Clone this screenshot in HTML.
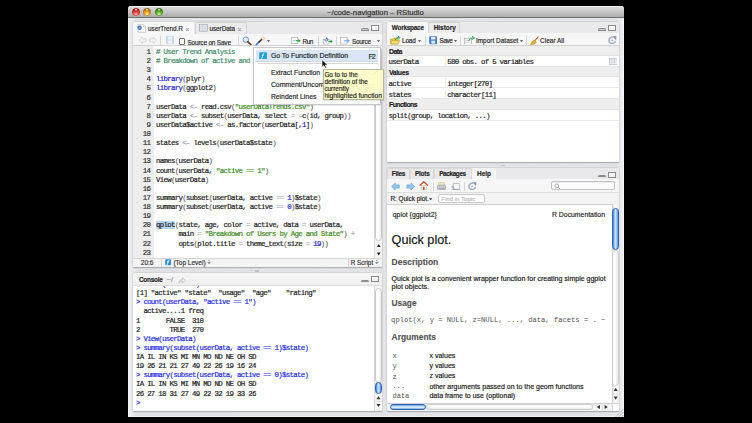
<!DOCTYPE html>
<html><head><meta charset="utf-8">
<style>
*{box-sizing:border-box;margin:0;padding:0}
html,body{width:752px;height:423px;overflow:hidden;background:#000}
body{position:relative;font-family:"Liberation Sans",sans-serif;color:#222}
.a{position:absolute}
.t{position:absolute;white-space:pre;line-height:1;-webkit-text-stroke:0.15px currentColor}
.code{font-family:"Liberation Mono",monospace;font-size:7.4px;letter-spacing:-0.69px;line-height:9.12px;white-space:pre;position:absolute;-webkit-text-stroke:0.2px currentColor}
.cm{color:#3f8a6c}
.kw{color:#2020d8}
.st{color:#3b8a22}
.nm{color:#2020d8}
.op{color:#9a9a9a}
.pa{color:#6b6b6b}
.sel{background:#b9d7fb}
.pr{color:#1e2cf0}
</style></head><body>

<div class="a" style="left:127.60px;top:6.00px;width:496.40px;height:411.00px;background:linear-gradient(90deg,#eceef1,#e1e2e6 1.5%,#e3e4e8 50%,#e1e2e6 98.5%,#eceef1);border-radius:3px 3px 0 0;border-left:0.6px solid #f6f6f6;border-right:0.6px solid #f6f6f6;border-bottom:0.8px solid #f4f4f4"></div>
<div class="a" style="left:127.60px;top:6.00px;width:496.40px;height:12.30px;background:linear-gradient(#f2f2f2 0,#dcdcdc 10%,#adadad 100%);border-bottom:1px solid #6e6e6e;border-radius:3px 3px 0 0"></div>
<svg class="a" style="left:132.00px;top:7.85px" width="8.00" height="8.00" viewBox="0 0 8.00 8.00"><defs><radialGradient id="tl0" cx="50%" cy="85%" r="75%"><stop offset="0" stop-color="#ffc0b8"/><stop offset="0.55" stop-color="#f0382e"/><stop offset="1" stop-color="#a51a12"/></radialGradient><radialGradient id="th0" cx="50%" cy="40%" r="60%"><stop offset="0" stop-color="#fff" stop-opacity=".95"/><stop offset="1" stop-color="#fff" stop-opacity="0"/></radialGradient></defs><circle cx="4" cy="4" r="3.7" fill="url(#tl0)" stroke="#a51a12" stroke-width="0.4"/><ellipse cx="4" cy="1.9" rx="1.6" ry="1.1" fill="url(#th0)"/></svg>
<svg class="a" style="left:143.10px;top:7.85px" width="8.00" height="8.00" viewBox="0 0 8.00 8.00"><defs><radialGradient id="tl1" cx="50%" cy="85%" r="75%"><stop offset="0" stop-color="#fff29a"/><stop offset="0.55" stop-color="#f29a1a"/><stop offset="1" stop-color="#9a5a08"/></radialGradient><radialGradient id="th1" cx="50%" cy="40%" r="60%"><stop offset="0" stop-color="#fff" stop-opacity=".95"/><stop offset="1" stop-color="#fff" stop-opacity="0"/></radialGradient></defs><circle cx="4" cy="4" r="3.7" fill="url(#tl1)" stroke="#9a5a08" stroke-width="0.4"/><ellipse cx="4" cy="1.9" rx="1.6" ry="1.1" fill="url(#th1)"/></svg>
<svg class="a" style="left:154.50px;top:7.85px" width="8.00" height="8.00" viewBox="0 0 8.00 8.00"><defs><radialGradient id="tl2" cx="50%" cy="85%" r="75%"><stop offset="0" stop-color="#cff79a"/><stop offset="0.55" stop-color="#5cb52a"/><stop offset="1" stop-color="#2f6a10"/></radialGradient><radialGradient id="th2" cx="50%" cy="40%" r="60%"><stop offset="0" stop-color="#fff" stop-opacity=".95"/><stop offset="1" stop-color="#fff" stop-opacity="0"/></radialGradient></defs><circle cx="4" cy="4" r="3.7" fill="url(#tl2)" stroke="#2f6a10" stroke-width="0.4"/><ellipse cx="4" cy="1.9" rx="1.6" ry="1.1" fill="url(#th2)"/></svg>
<div class="t" style="left:327.00px;top:8.85px;font-size:7.70px;color:#2e2e2e;">~/code-navigation – RStudio</div>
<div class="a" style="left:133.00px;top:22.00px;width:249.00px;height:245.00px;background:#fff;box-shadow:0 0 1px rgba(0,0,0,.28),0 0.8px 1.2px rgba(0,0,0,.25);border-radius:2px 2px 0 0"></div>
<div class="a" style="left:133.00px;top:22.00px;width:249.00px;height:11.60px;background:#e9e9eb"></div>
<div class="a" style="left:133.00px;top:22.00px;width:60.70px;height:11.80px;background:#f7f7f7;border-radius:2px 2px 0 0"></div>
<div class="a" style="left:194.50px;top:22.40px;width:52.30px;height:11.20px;background:#ebebeb;border:0.6px solid #d2d2d2;border-bottom:none;border-radius:2px 2px 0 0"></div>
<div class="a" style="left:133.00px;top:33.60px;width:249.00px;height:12.40px;background:#f6f6f6;border-bottom:0.8px solid #cfcfcf"></div>
<div class="a" style="left:133.00px;top:46.00px;width:249.00px;height:212.00px;background:#fff"></div>
<div class="a" style="left:133.00px;top:46.00px;width:21.00px;height:212.00px;background:#ededed"></div>
<div class="a" style="left:133.00px;top:258.00px;width:249.00px;height:9.00px;background:#f4f4f4;border-top:0.8px solid #d6d6d6"></div>
<div class="a" style="left:361.00px;top:28.20px;width:7.80px;height:2.60px;border:0.7px solid #8c8c8c;border-radius:2px 2px 0.5px 0.5px;background:linear-gradient(#e6e6e6,#b8b8b8)"></div>
<div class="a" style="left:371.00px;top:24.90px;width:7.60px;height:6.00px;border:0.6px solid #8a8a8a;background:linear-gradient(#fdfdfd,#ececec)"></div>
<svg class="a" style="left:137.00px;top:24.00px" width="10.00" height="9.00" viewBox="0 0 10.00 9.00"><path d="M1.3 0.4 H6 L8.7 3.1 V8.3 H1.3 Z" fill="#fbfbfb" stroke="#a8a8a8" stroke-width="0.55"/><path d="M6 0.4 V3.1 H8.7" fill="#e8e8e8" stroke="#b0b0b0" stroke-width="0.45"/><circle cx="2.6" cy="3.8" r="2.3" fill="#3f78c4"/><path d="M1.8 4.8 L3.4 2.8" stroke="#e6f0fb" stroke-width="0.7"/></svg>
<div class="t" style="left:148.00px;top:26.06px;font-size:6.40px;letter-spacing:-0.033px;color:#1f1f2a;">userTrend.R</div>
<div class="t" style="left:185.20px;top:25.55px;font-size:7.00px;color:#9a9a9a;">×</div>
<svg class="a" style="left:199.00px;top:24.20px" width="9.00" height="7.60" viewBox="0 0 9.00 7.60"><rect x="0.5" y="0.5" width="8" height="6.6" fill="#f4f6f8" stroke="#8b97a6" stroke-width="0.6"/><path d="M0.5 2.6H8.5M0.5 4.8H8.5M3.2 0.5V7.1M5.9 0.5V7.1" stroke="#a8b4c2" stroke-width="0.5"/></svg>
<div class="t" style="left:209.50px;top:26.06px;font-size:6.40px;letter-spacing:-0.067px;color:#1f1f2a;">userData</div>
<div class="t" style="left:237.60px;top:25.55px;font-size:7.00px;color:#9a9a9a;">×</div>
<svg class="a" style="left:137.50px;top:36.00px" width="19.50" height="9.00" viewBox="0 0 19.50 9.00"><path d="M1 4.3 L4.3 1 V2.8 H8 V5.8 H4.3 V7.6 Z" fill="#f3f3f3" stroke="#c8c8c8" stroke-width="0.7"/><path d="M18.6 4.3 L15.3 1 V2.8 H11.6 V5.8 H15.3 V7.6 Z" fill="#f3f3f3" stroke="#d0d0d0" stroke-width="0.7"/></svg>
<div class="a" style="left:160.30px;top:36.00px;width:0.70px;height:9.00px;background:#d6d6d6"></div>
<svg class="a" style="left:165.80px;top:36.30px" width="8.20" height="8.20" viewBox="0 0 8.20 8.20"><rect x="0.5" y="0.5" width="7.2" height="7.2" rx="0.8" fill="#cfe0f2" stroke="#b0c8e0" stroke-width="0.6"/><rect x="2" y="0.8" width="4.2" height="2.6" fill="#eef5fc"/><rect x="2.3" y="4.6" width="3.6" height="3" fill="#f2f7fc"/></svg>
<div class="a" style="left:179.00px;top:38.10px;width:6.40px;height:6.70px;background:#fff;border:0.8px solid #6e6e6e;border-radius:1px"></div>
<div class="t" style="left:187.50px;top:39.86px;font-size:6.40px;letter-spacing:-0.157px;color:#1f1f2a;">Source on Save</div>
<div class="a" style="left:237.70px;top:36.00px;width:0.70px;height:9.00px;background:#d6d6d6"></div>
<svg class="a" style="left:242.00px;top:35.80px" width="10.00" height="9.20" viewBox="0 0 10.00 9.20"><circle cx="3.9" cy="3.7" r="2.8" fill="#cfe4fa" stroke="#5e86b8" stroke-width="0.8"/><circle cx="3.4" cy="3" r="1.1" fill="#f4faff"/><path d="M5.9 5.8 L8.8 8.6" stroke="#6a3e18" stroke-width="1.7" stroke-linecap="round"/></svg>
<svg class="a" style="left:255.00px;top:35.50px" width="11.00" height="10.00" viewBox="0 0 11.00 10.00"><path d="M1.2 8.8 L4.5 5.6" stroke="#2f78c8" stroke-width="1.5" stroke-linecap="round"/><path d="M4.3 5.8 L7.2 3" stroke="#222" stroke-width="1.5" stroke-linecap="round"/><path d="M8 0.2 V5.2 M5.6 2.7 H10.6 M6.3 1 L9.7 4.4 M9.7 1 L6.3 4.4" stroke="#f5a560" stroke-width="0.55"/><circle cx="8" cy="2.7" r="0.9" fill="#fff"/></svg>
<svg class="a" style="left:267.00px;top:39.50px" width="3.50" height="2.50" viewBox="0 0 3.50 2.50"><path d="M0 0.3 H3 L1.5 2 Z" fill="#333"/></svg>
<svg class="a" style="left:290.50px;top:37.00px" width="11.00" height="7.50" viewBox="0 0 11.00 7.50"><rect x="0.4" y="0.6" width="6.4" height="6.2" fill="#fff" stroke="#9a9a9a" stroke-width="0.5"/><path d="M1.4 3.7 H5.5" stroke="#8db4e6" stroke-width="0.8"/><path d="M5 3.7 H7.8" stroke="#2a9a3a" stroke-width="1.1"/><path d="M7.4 1.8 L9.8 3.7 L7.4 5.6 Z" fill="#2a9a3a"/></svg>
<div class="t" style="left:302.60px;top:38.66px;font-size:6.40px;letter-spacing:-0.520px;color:#1f1f2a;">Run</div>
<div class="a" style="left:318.20px;top:36.00px;width:0.70px;height:9.00px;background:#d6d6d6"></div>
<svg class="a" style="left:323.00px;top:37.00px" width="11.00" height="7.50" viewBox="0 0 11.00 7.50"><rect x="0.4" y="2.6" width="5.6" height="4.4" fill="#fff" stroke="#9a9a9a" stroke-width="0.5"/><path d="M1.8 2.4 A1.5 1.5 0 1 0 3.6 1.2" stroke="#2a5fd0" stroke-width="0.8" fill="none"/><path d="M3.9 0.2 L4.2 2 L2.6 1.5Z" fill="#2a5fd0"/><path d="M5.4 4.4 H8" stroke="#2a9a3a" stroke-width="1.1"/><path d="M7.6 2.6 L9.8 4.4 L7.6 6.2 Z" fill="#2a9a3a"/></svg>
<div class="a" style="left:336.10px;top:36.00px;width:0.70px;height:9.00px;background:#d6d6d6"></div>
<svg class="a" style="left:339.50px;top:37.00px" width="11.50" height="7.50" viewBox="0 0 11.50 7.50"><rect x="0.4" y="0.6" width="6.6" height="6.4" fill="#fff" stroke="#9a9a9a" stroke-width="0.5"/><path d="M4 3.8 H7.8" stroke="#6aaaf0" stroke-width="1.1"/><path d="M7.3 1.8 L10 3.8 L7.3 5.8 Z" fill="#6aaaf0"/></svg>
<div class="t" style="left:352.00px;top:38.66px;font-size:6.40px;letter-spacing:-0.256px;color:#1f1f2a;">Source</div>
<svg class="a" style="left:376.50px;top:39.50px" width="3.50" height="2.50" viewBox="0 0 3.50 2.50"><path d="M0 0.3 H3 L1.5 2 Z" fill="#333"/></svg>
<div class="code" style="left:132.8px;top:47.9px;width:17.5px;text-align:right;color:#333">1
2
3
4
5
6
7
8
9
10
11
12
13
14
15
16
17
18
19
20
21
22
23</div>
<div class="code" style="left:156px;top:47.9px;color:#1e1e1e"><span class="cm"># User Trend Analysis</span>
<span class="cm"># Breakdown of active and inactive users</span>

<span class="kw">library</span><span class="pa">(</span>plyr<span class="pa">)</span>
<span class="kw">library</span><span class="pa">(</span>ggplot2<span class="pa">)</span>

userData <span class="op">&lt;-</span> read.csv<span class="pa">(</span><span class="st">"userDataTrends.csv"</span><span class="pa">)</span>
userData <span class="op">&lt;-</span> subset<span class="pa">(</span>userData, select <span class="op">=</span> <span class="op">-</span>c<span class="pa">(</span>id, group<span class="pa">))</span>
userData$active <span class="op">&lt;-</span> as.factor<span class="pa">(</span>userData[,<span class="nm">1</span>]<span class="pa">)</span>

states <span class="op">&lt;-</span> levels<span class="pa">(</span>userData$state<span class="pa">)</span>

names<span class="pa">(</span>userData<span class="pa">)</span>
count<span class="pa">(</span>userData, <span class="st">"active == 1"</span><span class="pa">)</span>
View<span class="pa">(</span>userData<span class="pa">)</span>

summary<span class="pa">(</span>subset<span class="pa">(</span>userData, active <span class="op">==</span> <span class="nm">1</span><span class="pa">)</span>$state<span class="pa">)</span>
summary<span class="pa">(</span>subset<span class="pa">(</span>userData, active <span class="op">==</span> <span class="nm">0</span><span class="pa">)</span>$state<span class="pa">)</span>

<span class="sel">qplot</span><span class="pa">(</span>state, age, color <span class="op">=</span> active, data <span class="op">=</span> userData,
      main <span class="op">=</span> <span class="st">"Breakdown of Users by Age and State"</span><span class="pa">)</span> <span class="op">+</span>
      opts<span class="pa">(</span>plot.title <span class="op">=</span> theme_text<span class="pa">(</span>size <span class="op">=</span> <span class="nm">19</span><span class="pa">))</span>
</div>
<div class="a" style="left:374.30px;top:46.00px;width:7.70px;height:212.00px;background:#f4f4f4;border-left:0.6px solid #d8d8d8"></div>
<div class="a" style="left:374.80px;top:47.00px;width:6.80px;height:193.60px;background:linear-gradient(90deg,#fafafa,#ffffff 50%,#e8e8e8);border:0.6px solid #c8c8c8;border-radius:3.5px"></div>
<svg class="a" style="left:374.50px;top:241.50px" width="7.50" height="16.50" viewBox="0 0 7.50 16.50"><path d="M1.9 5.0 H5.6 L3.75 2.0Z" fill="#222"/><path d="M0.3 8.0 H7.5" stroke="#d0d0d0" stroke-width="0.5"/><path d="M1.9 10.6 H5.6 L3.75 13.6Z" fill="#222"/></svg>
<div class="t" style="left:140.80px;top:260.05px;font-size:6.53px;color:#333;">20:6</div>
<div class="a" style="left:161.00px;top:258.50px;width:0.70px;height:8.50px;background:#d4d4d4"></div>
<svg class="a" style="left:164.60px;top:259.20px" width="6.40" height="6.40" viewBox="0 0 6.40 6.40"><rect x="0.2" y="0.2" width="6" height="6" rx="1" fill="#2e8fd0"/><path d="M4.5 1.2 Q3.2 0.9 3 2.2 L2.5 5.3 Q2.3 6 1.5 5.8 M2 2.8 H4.3" stroke="#fff" stroke-width="0.8" fill="none"/></svg>
<div class="t" style="left:173.40px;top:260.06px;font-size:6.51px;color:#333;">(Top Level) ÷</div>
<div class="a" style="left:347.50px;top:258.50px;width:0.70px;height:8.50px;background:#d4d4d4"></div>
<div class="t" style="left:350.70px;top:260.23px;font-size:6.32px;color:#333;">R Script ÷</div>
<div class="a" style="left:252.80px;top:46.70px;width:127.80px;height:58.30px;background:#fff;border:0.7px solid #c6c6cc;box-shadow:0 0.5px 1.5px rgba(0,0,0,.2)"></div>
<div class="a" style="left:255.60px;top:50.20px;width:122.90px;height:11.60px;background:#d9e6f5;border-bottom:0.6px solid #cbd8e8"></div>
<svg class="a" style="left:259.10px;top:51.70px" width="8.20" height="7.50" viewBox="0 0 8.20 7.50"><rect x="0.2" y="0.2" width="7.8" height="7.2" rx="1.1" fill="#1f9fd8"/><path d="M5.3 1.6 Q4 1.3 3.8 2.7 L3.2 6 Q3 6.8 2.1 6.6 M2.6 3.3 H5" stroke="#fff" stroke-width="0.75" fill="none"/></svg>
<div class="t" style="left:270.90px;top:53.23px;font-size:6.90px;color:#1a1a1a;">Go To Function Definition</div>
<div class="t" style="left:368.60px;top:53.28px;font-size:7.20px;letter-spacing:-1.202px;color:#1a1a1a;">F2</div>
<div class="a" style="left:258.00px;top:62.90px;width:120.00px;height:0.80px;background:#d6d6d6"></div>
<div class="t" style="left:270.90px;top:69.50px;font-size:6.82px;color:#1a1a1a;">Extract Function</div>
<div class="t" style="left:361.00px;top:70.03px;font-size:6.20px;color:#9a9a9a;">⌃⌥X</div>
<div class="t" style="left:270.90px;top:82.06px;font-size:6.87px;color:#1a1a1a;">Comment/Uncomment Lines</div>
<div class="t" style="left:360.00px;top:82.63px;font-size:6.20px;color:#9a9a9a;">⇧⌘C</div>
<div class="t" style="left:270.90px;top:93.80px;font-size:6.82px;color:#1a1a1a;">Reindent Lines</div>
<div class="t" style="left:368.00px;top:95.03px;font-size:6.20px;color:#9a9a9a;">⌘I</div>
<div class="a" style="left:322.80px;top:69.20px;width:61.20px;height:30.40px;background:rgba(253,252,196,0.9);border:0.6px solid #b8b79a;box-shadow:0 0.5px 1.5px rgba(0,0,0,.25)"></div>
<div class="t" style="left:324.40px;top:71.75px;font-size:6.41px;color:#1a1a1a;">Go to to the</div>
<div class="t" style="left:324.40px;top:78.75px;font-size:6.41px;color:#1a1a1a;">definition of the</div>
<div class="t" style="left:324.40px;top:85.77px;font-size:6.39px;color:#1a1a1a;">currently</div>
<div class="t" style="left:324.40px;top:92.52px;font-size:6.68px;color:#1a1a1a;">highlighted function</div>
<svg class="a" style="left:320.50px;top:58.80px" width="7.50" height="9.70" viewBox="0 0 7.50 9.70"><path d="M1 0.8 L1 8.2 L2.9 6.5 L4.3 9.2 L5.5 8.6 L4.2 6 L6.6 6 Z" fill="#111" stroke="#fff" stroke-width="0.6"/></svg>
<div class="a" style="left:133.00px;top:273.30px;width:249.00px;height:137.70px;background:#fff;box-shadow:0 0 1px rgba(0,0,0,.28),0 0.8px 1.2px rgba(0,0,0,.25);border-radius:2px 2px 0 0"></div>
<div class="a" style="left:133.00px;top:273.30px;width:249.00px;height:12.30px;background:linear-gradient(#f6f6f7,#eeeeef);border-bottom:0.6px solid #dcdcdc;border-radius:2px 2px 0 0"></div>
<div class="t" style="left:139.00px;top:276.96px;font-size:6.40px;letter-spacing:-0.241px;font-weight:bold;color:#222;">Console</div>
<div class="t" style="left:166.30px;top:275.50px;font-size:8.12px;color:#8a8a8a;">~/</div>
<svg class="a" style="left:178.00px;top:276.50px" width="9.00" height="7.00" viewBox="0 0 9.00 7.00"><path d="M0.8 5.8 Q1 2.6 4.6 2.6 V0.9 L7.8 3.4 L4.6 5.9 V4.2 Q2.2 4.2 0.8 5.8Z" fill="#f4f4f4" stroke="#a9a9a9" stroke-width="0.6"/></svg>
<div class="a" style="left:361.00px;top:279.50px;width:7.80px;height:2.60px;border:0.7px solid #8c8c8c;border-radius:2px 2px 0.5px 0.5px;background:linear-gradient(#e6e6e6,#b8b8b8)"></div>
<div class="a" style="left:371.00px;top:276.20px;width:7.60px;height:6.00px;border:0.6px solid #8a8a8a;background:linear-gradient(#fdfdfd,#ececec)"></div>
<div class="a" style="left:133px;top:285.6px;width:241px;height:125.4px;overflow:hidden">
<div class="code" style="left:2.9px;top:-5.6px;color:#1e1e1e"><span class="pr">&gt; names(userData)</span>
[1] "active" "state"  "usage"  "age"    "rating"
<span class="pr">&gt; count(userData, "active == 1")</span>
  active....1 freq
1       FALSE  310
2        TRUE  270
<span class="pr">&gt; View(userData)</span>
<span class="pr">&gt; summary(subset(userData, active == 1)$state)</span>
IA IL IN KS MI MN MO ND NE OH SD
19 26 21 21 27 49 22 26 19 16 24
<span class="pr">&gt; summary(subset(userData, active == 0)$state)</span>
IA IL IN KS MI MN MO ND NE OH SD
26 27 18 31 27 49 22 32 19 33 26
<span class="pr">&gt; </span></div>
</div>
<div class="a" style="left:374.30px;top:285.60px;width:7.70px;height:125.40px;background:#f4f4f4;border-left:0.6px solid #d8d8d8"></div>
<div class="a" style="left:374.80px;top:288.00px;width:6.80px;height:94.50px;background:linear-gradient(90deg,#fafafa,#ffffff 50%,#e8e8e8);border:0.6px solid #c8c8c8;border-radius:3.5px"></div>
<div class="a" style="left:374.90px;top:381.80px;width:6.70px;height:11.80px;background:linear-gradient(90deg,#3d7fd6,#b8dcfb 40%,#cfe8fd 55%,#4a8ee0);border:0.7px solid #2f62b0;border-radius:3.5px"></div>
<svg class="a" style="left:375.00px;top:394.00px" width="7.00" height="16.00" viewBox="0 0 7.00 16.00"><path d="M1.5 5.2 H5.5 L3.5 2.2Z" fill="#333"/><path d="M0 7.4 H7" stroke="#ccc" stroke-width="0.5"/><path d="M1.5 10 H5.5 L3.5 13Z" fill="#333"/></svg>
<div class="a" style="left:387.00px;top:22.00px;width:232.00px;height:139.80px;background:#fff;box-shadow:0 0 1px rgba(0,0,0,.28),0 0.8px 1.2px rgba(0,0,0,.25);border-radius:2px 2px 0 0"></div>
<div class="a" style="left:387.00px;top:22.00px;width:232.00px;height:11.40px;background:#e9e9eb"></div>
<div class="a" style="left:387.00px;top:22.00px;width:41.30px;height:11.60px;background:#f7f7f7;border-radius:2px 2px 0 0"></div>
<div class="a" style="left:428.30px;top:22.40px;width:31.70px;height:11.00px;background:#ebebeb;border:0.6px solid #d2d2d2;border-bottom:none;border-radius:2px 2px 0 0"></div>
<div class="t" style="left:391.80px;top:25.26px;font-size:6.40px;letter-spacing:-0.229px;font-weight:bold;color:#222;">Workspace</div>
<div class="t" style="left:433.70px;top:25.26px;font-size:6.40px;letter-spacing:0.008px;font-weight:bold;color:#222;">History</div>
<div class="a" style="left:598.00px;top:28.20px;width:7.80px;height:2.60px;border:0.7px solid #8c8c8c;border-radius:2px 2px 0.5px 0.5px;background:linear-gradient(#e6e6e6,#b8b8b8)"></div>
<div class="a" style="left:608.00px;top:24.90px;width:7.60px;height:6.00px;border:0.6px solid #8a8a8a;background:linear-gradient(#fdfdfd,#ececec)"></div>
<div class="a" style="left:387.00px;top:33.40px;width:232.00px;height:12.80px;background:#f6f6f6;border-bottom:0.8px solid #d2d2d2"></div>
<svg class="a" style="left:389.50px;top:35.50px" width="11.50" height="9.00" viewBox="0 0 11.50 9.00"><path d="M0.6 3 H3.5 L4.3 2 H8 V8 H0.6Z" fill="#e8c84a" stroke="#b08a20" stroke-width="0.5"/><path d="M0.6 8 L2 4.5 H9.8 L8 8Z" fill="#f5dc70" stroke="#b08a20" stroke-width="0.5"/><path d="M5 4 Q6 1.5 9 1.5 M8 0.3 L10.2 1.5 L8.3 3" stroke="#22a05a" stroke-width="1" fill="none"/></svg>
<div class="t" style="left:402.00px;top:38.16px;font-size:6.40px;letter-spacing:-0.179px;color:#222;">Load</div>
<svg class="a" style="left:417.50px;top:39.50px" width="3.50" height="2.50" viewBox="0 0 3.50 2.50"><path d="M0 0.3 H3 L1.5 2 Z" fill="#333"/></svg>
<div class="a" style="left:424.50px;top:36.00px;width:0.70px;height:9.00px;background:#d6d6d6"></div>
<svg class="a" style="left:428.60px;top:36.20px" width="8.40" height="8.40" viewBox="0 0 8.40 8.40"><rect x="0.5" y="0.5" width="7.4" height="7.4" rx="0.8" fill="#3d7fd0" stroke="#2a5fa8" stroke-width="0.5"/><rect x="2" y="0.8" width="4.4" height="2.7" fill="#eaf2fb"/><rect x="2.3" y="4.7" width="3.8" height="3" fill="#dde9f7"/></svg>
<div class="t" style="left:439.60px;top:38.16px;font-size:6.40px;letter-spacing:-0.463px;color:#222;">Save</div>
<svg class="a" style="left:454.00px;top:39.50px" width="3.50" height="2.50" viewBox="0 0 3.50 2.50"><path d="M0 0.3 H3 L1.5 2 Z" fill="#333"/></svg>
<div class="a" style="left:460.40px;top:36.00px;width:0.70px;height:9.00px;background:#d6d6d6"></div>
<svg class="a" style="left:463.80px;top:35.80px" width="11.20" height="8.70" viewBox="0 0 11.20 8.70"><rect x="0.5" y="2.5" width="7" height="5.8" fill="#f8f8f8" stroke="#8a8a8a" stroke-width="0.5"/><path d="M1.5 4.5H6.5M1.5 6.3H6.5" stroke="#bbb" stroke-width="0.5"/><path d="M4.5 5 Q6 2 9 1.8 M8 0.4 L10.6 1.8 L8.2 3.4" stroke="#22a05a" stroke-width="1" fill="none"/></svg>
<div class="t" style="left:475.90px;top:38.16px;font-size:6.40px;letter-spacing:0.041px;color:#222;">Import Dataset</div>
<svg class="a" style="left:520.00px;top:39.50px" width="3.50" height="2.50" viewBox="0 0 3.50 2.50"><path d="M0 0.3 H3 L1.5 2 Z" fill="#333"/></svg>
<div class="a" style="left:526.00px;top:36.00px;width:0.70px;height:9.00px;background:#d6d6d6"></div>
<svg class="a" style="left:530.00px;top:35.50px" width="9.00" height="9.50" viewBox="0 0 9.00 9.50"><path d="M8.4 0.6 L4.5 5" stroke="#c0522a" stroke-width="1.1"/><path d="M4.8 4.2 Q2 4.2 0.6 8.6 Q4 9 6.2 6.4 Z" fill="#e6b72a" stroke="#a87a10" stroke-width="0.5"/></svg>
<div class="t" style="left:540.00px;top:38.16px;font-size:6.40px;letter-spacing:0.059px;color:#222;">Clear All</div>
<svg class="a" style="left:607.50px;top:35.80px" width="9.00" height="8.70" viewBox="0 0 9.00 8.70"><path d="M7.3 5 A3.2 3.2 0 1 1 5 1.3" stroke="#8494b2" stroke-width="1.35" fill="none"/><path d="M7.3 5 A3.2 3.2 0 1 1 5 1.3" stroke="#e8eef8" stroke-width="0.4" fill="none"/><path d="M4.4 0.1 L8.4 0.3 L8.1 4.3 Z" fill="#8494b2"/><circle cx="4.2" cy="4.5" r="0.9" fill="#a3b0c6"/></svg>
<div class="a" style="left:387.00px;top:46.20px;width:232.00px;height:9.60px;background:#eeeeee;border-bottom:0.6px solid #e4e4e4"></div>
<div class="t" style="left:389.00px;top:49.13px;font-size:6.90px;letter-spacing:-0.519px;font-weight:bold;color:#1a1a1a;">Data</div>
<div class="a" style="left:387.00px;top:55.80px;width:232.00px;height:11.40px;background:#fff;border-bottom:0.7px solid #e8e8e8"></div>
<div class="code" style="left:388.6px;top:58.20px;color:#1e1e1e">userData</div>
<div class="a" style="left:445.20px;top:55.80px;width:0.60px;height:11.40px;background:#ececec"></div>
<div class="code" style="left:447.2px;top:58.20px;color:#1e1e1e">580 obs. of 5 variables</div>
<div class="a" style="left:387.00px;top:67.20px;width:232.00px;height:10.20px;background:#eeeeee;border-bottom:0.6px solid #e4e4e4"></div>
<div class="t" style="left:389.00px;top:70.14px;font-size:6.90px;letter-spacing:-0.373px;font-weight:bold;color:#1a1a1a;">Values</div>
<div class="a" style="left:387.00px;top:77.40px;width:232.00px;height:10.80px;background:#fff;border-bottom:0.7px solid #e8e8e8"></div>
<div class="code" style="left:388.6px;top:79.80px;color:#1e1e1e">active</div>
<div class="a" style="left:445.20px;top:77.40px;width:0.60px;height:10.80px;background:#ececec"></div>
<div class="code" style="left:447.2px;top:79.80px;color:#1e1e1e">integer[270]</div>
<div class="a" style="left:387.00px;top:88.20px;width:232.00px;height:11.00px;background:#fff;border-bottom:0.7px solid #e8e8e8"></div>
<div class="code" style="left:388.6px;top:90.60px;color:#1e1e1e">states</div>
<div class="a" style="left:445.20px;top:88.20px;width:0.60px;height:11.00px;background:#ececec"></div>
<div class="code" style="left:447.2px;top:90.60px;color:#1e1e1e">character[11]</div>
<div class="a" style="left:387.00px;top:99.20px;width:232.00px;height:10.40px;background:#eeeeee;border-bottom:0.6px solid #e4e4e4"></div>
<div class="t" style="left:389.00px;top:102.14px;font-size:6.90px;letter-spacing:-0.545px;font-weight:bold;color:#1a1a1a;">Functions</div>
<div class="a" style="left:387.00px;top:109.60px;width:232.00px;height:11.00px;background:#fff;border-bottom:0.7px solid #e8e8e8"></div>
<div class="code" style="left:388.6px;top:112.00px;color:#1e1e1e">split(group, location, ...)</div>
<svg class="a" style="left:608.80px;top:58.20px" width="8.60" height="6.60" viewBox="0 0 8.60 6.60"><rect x="0.3" y="0.3" width="8" height="6" fill="#eef2f7" stroke="#9aa7b8" stroke-width="0.5"/><path d="M0.3 2.3H8.3M0.3 4.3H8.3M3 0.3V6.3M5.6 0.3V6.3" stroke="#b8c3d0" stroke-width="0.4"/></svg>
<div class="a" style="left:387.00px;top:167.80px;width:232.00px;height:243.20px;background:#fff;box-shadow:0 0 1px rgba(0,0,0,.28),0 0.8px 1.2px rgba(0,0,0,.25);border-radius:2px 2px 0 0"></div>
<div class="a" style="left:387.00px;top:167.80px;width:232.00px;height:11.20px;background:#e9e9eb"></div>
<div class="a" style="left:387.00px;top:167.90px;width:23.20px;height:11.10px;background:#e9e9ea;border:0.6px solid #d8d8d8;border-bottom:none;border-radius:2px 2px 0 0"></div>
<div class="t" style="left:391.80px;top:171.06px;font-size:6.40px;letter-spacing:-0.271px;font-weight:bold;color:#222;">Files</div>
<div class="a" style="left:410.20px;top:167.90px;width:24.20px;height:11.10px;background:#e9e9ea;border:0.6px solid #d8d8d8;border-bottom:none;border-radius:2px 2px 0 0"></div>
<div class="t" style="left:415.00px;top:171.06px;font-size:6.40px;letter-spacing:-0.212px;font-weight:bold;color:#222;">Plots</div>
<div class="a" style="left:434.40px;top:167.90px;width:37.60px;height:11.10px;background:#e9e9ea;border:0.6px solid #d8d8d8;border-bottom:none;border-radius:2px 2px 0 0"></div>
<div class="t" style="left:439.20px;top:171.06px;font-size:6.40px;letter-spacing:-0.362px;font-weight:bold;color:#222;">Packages</div>
<div class="a" style="left:472.00px;top:167.80px;width:23.60px;height:11.40px;background:#f7f7f7;border-radius:2px 2px 0 0"></div>
<div class="t" style="left:477.00px;top:171.06px;font-size:6.40px;letter-spacing:0.044px;font-weight:bold;color:#222;">Help</div>
<div class="a" style="left:598.00px;top:174.80px;width:7.80px;height:2.60px;border:0.7px solid #8c8c8c;border-radius:2px 2px 0.5px 0.5px;background:linear-gradient(#e6e6e6,#b8b8b8)"></div>
<div class="a" style="left:608.00px;top:171.50px;width:7.60px;height:6.00px;border:0.6px solid #8a8a8a;background:linear-gradient(#fdfdfd,#ececec)"></div>
<div class="a" style="left:387.00px;top:179.00px;width:232.00px;height:13.60px;background:#f6f6f6;border-bottom:0.6px solid #dedede"></div>
<svg class="a" style="left:390.50px;top:181.50px" width="24.50" height="9.00" viewBox="0 0 24.50 9.00"><path d="M0.6 4.5 L4.2 1 V2.9 H8.3 V6.1 H4.2 V8 Z" fill="#8ec6f0" stroke="#5a9fd6" stroke-width="0.6"/><path d="M23.6 4.5 L20 1 V2.9 H15.9 V6.1 H20 V8 Z" fill="#8ec6f0" stroke="#5a9fd6" stroke-width="0.6"/></svg>
<svg class="a" style="left:419.30px;top:181.00px" width="9.70" height="9.50" viewBox="0 0 9.70 9.50"><path d="M0.6 4.6 L4.8 0.7 L9 4.6" stroke="#c8421a" stroke-width="1.2" fill="none"/><rect x="2.2" y="4.3" width="5.2" height="4.6" fill="#f3efe6" stroke="#b8a78a" stroke-width="0.4"/><rect x="4" y="5.8" width="1.6" height="3.1" fill="#b0622a"/></svg>
<div class="a" style="left:432.60px;top:181.50px;width:0.70px;height:9.00px;background:#d6d6d6"></div>
<svg class="a" style="left:436.90px;top:181.80px" width="9.40" height="8.20" viewBox="0 0 9.40 8.20"><rect x="1.8" y="0.4" width="5.6" height="3.2" fill="#f3e6ad" stroke="#c2b27a" stroke-width="0.45"/><rect x="0.4" y="3.2" width="8.4" height="4.4" rx="1" fill="#c8c8cc" stroke="#8f9096" stroke-width="0.5"/><rect x="1.2" y="6" width="6.8" height="1.6" fill="#aeb0b6"/></svg>
<svg class="a" style="left:450.80px;top:182.60px" width="9.70" height="7.00" viewBox="0 0 9.70 7.00"><path d="M2.2 0.6 H7.8 Q8.8 0.6 8.8 1.6 V6.4 H2.2 Z" fill="#f7f9fc" stroke="#8595ad" stroke-width="0.6"/><path d="M3.6 5.6 Q1.8 5.6 1.5 3.6 M0.6 4.5 L1.5 3 L2.5 4.4" stroke="#8595ad" stroke-width="0.6" fill="none"/><path d="M0.5 6.4 H8.8" stroke="#8595ad" stroke-width="0.6"/></svg>
<div class="a" style="left:463.70px;top:181.50px;width:0.70px;height:9.00px;background:#d6d6d6"></div>
<svg class="a" style="left:467.50px;top:181.60px" width="9.00" height="8.80" viewBox="0 0 9.00 8.80"><path d="M7.3 5 A3.2 3.2 0 1 1 5 1.3" stroke="#8494b2" stroke-width="1.35" fill="none"/><path d="M7.3 5 A3.2 3.2 0 1 1 5 1.3" stroke="#e8eef8" stroke-width="0.4" fill="none"/><path d="M4.4 0.1 L8.4 0.3 L8.1 4.3 Z" fill="#8494b2"/><circle cx="4.2" cy="4.5" r="0.9" fill="#a3b0c6"/></svg>
<div class="a" style="left:551.00px;top:181.40px;width:63.60px;height:9.00px;background:#fff;border:0.6px solid #c2c2c2;border-radius:2px;box-shadow:inset 0 0.5px 1px rgba(0,0,0,.15)"></div>
<svg class="a" style="left:553.50px;top:182.60px" width="6.50" height="6.80" viewBox="0 0 6.50 6.80"><circle cx="2.8" cy="2.8" r="1.9" fill="none" stroke="#888" stroke-width="0.7"/><path d="M4.2 4.2 L6 6" stroke="#888" stroke-width="0.9"/></svg>
<div class="a" style="left:387.00px;top:192.60px;width:232.00px;height:12.00px;background:#f3f3f3;border-bottom:0.6px solid #cfcfcf"></div>
<div class="t" style="left:390.40px;top:195.75px;font-size:6.41px;color:#1a1a1a;">R: Quick plot.</div>
<svg class="a" style="left:429.30px;top:197.50px" width="3.70" height="2.50" viewBox="0 0 3.70 2.50"><path d="M0 0.3 H3.2 L1.6 2.2 Z" fill="#222"/></svg>
<div class="a" style="left:437.90px;top:194.40px;width:47.50px;height:8.80px;background:#fff;border:0.6px solid #c8c8c8;border-radius:2px"></div>
<div class="t" style="left:441.20px;top:195.84px;font-size:6.08px;color:#b8b8b8;">Find in Topic</div>
<div class="t" style="left:392.80px;top:212.45px;font-size:6.88px;color:#222;">qplot {ggplot2}</div>
<div class="t" style="left:552.00px;top:212.47px;font-size:6.86px;color:#222;">R Documentation</div>
<div class="t" style="left:391.60px;top:233.66px;font-size:12.64px;color:#111;">Quick plot.</div>
<div class="t" style="left:391.60px;top:257.78px;font-size:8.49px;font-weight:bold;color:#555;">Description</div>
<div class="t" style="left:391.60px;top:274.93px;font-size:7.02px;color:#111;">Quick plot is a convenient wrapper function for creating simple ggplot</div>
<div class="t" style="left:391.60px;top:283.13px;font-size:7.03px;color:#111;">plot objects.</div>
<div class="t" style="left:391.60px;top:299.22px;font-size:8.33px;font-weight:bold;color:#555;">Usage</div>
<div class="t" style="left:391.1px;top:317.2px;font-family:'Liberation Mono',monospace;font-size:7.15px;-webkit-text-stroke:0;color:#505050">qplot(x, y = NULL, z=NULL, ..., data, facets = . ~</div>
<div class="t" style="left:391.60px;top:333.13px;font-size:8.43px;font-weight:bold;color:#555;">Arguments</div>
<div class="t" style="left:392.5px;top:353.00px;font-family:'Liberation Mono',monospace;font-size:7px;-webkit-text-stroke:0;color:#505050">x</div>
<div class="t" style="left:429.40px;top:352.58px;font-size:7.09px;color:#111;">x values</div>
<div class="t" style="left:392.5px;top:363.30px;font-family:'Liberation Mono',monospace;font-size:7px;-webkit-text-stroke:0;color:#505050">y</div>
<div class="t" style="left:429.40px;top:362.88px;font-size:7.09px;color:#111;">y values</div>
<div class="t" style="left:392.5px;top:373.50px;font-family:'Liberation Mono',monospace;font-size:7px;-webkit-text-stroke:0;color:#505050">z</div>
<div class="t" style="left:429.40px;top:373.08px;font-size:7.09px;color:#111;">z values</div>
<div class="t" style="left:392.5px;top:383.00px;font-family:'Liberation Mono',monospace;font-size:7px;-webkit-text-stroke:0;color:#505050">...</div>
<div class="t" style="left:429.40px;top:382.65px;font-size:7.00px;color:#111;">other arguments passed on to the geom functions</div>
<div class="t" style="left:392.5px;top:392.70px;font-family:'Liberation Mono',monospace;font-size:7px;-webkit-text-stroke:0;color:#505050">data</div>
<div class="t" style="left:429.40px;top:392.32px;font-size:7.03px;color:#111;">data frame to use (optional)</div>
<div class="a" style="left:611.50px;top:204.00px;width:7.50px;height:199.00px;background:linear-gradient(90deg,#e8e8e8,#fafafa 40%,#f0f0f0);border-left:0.6px solid #d0d0d0"></div>
<div class="a" style="left:611.90px;top:207.50px;width:6.90px;height:42.00px;background:linear-gradient(90deg,#3d7fd6,#b8dcfb 40%,#cfe8fd 55%,#4a8ee0);border:0.7px solid #2f62b0;border-radius:3.5px"></div>
<div class="a" style="left:611.90px;top:250.00px;width:6.90px;height:136.00px;background:linear-gradient(90deg,#fafafa,#fff 50%,#e4e4e4);border:0.6px solid #cfcfcf;border-radius:3.5px"></div>
<svg class="a" style="left:611.50px;top:386.00px" width="7.50" height="17.00" viewBox="0 0 7.50 17.00"><path d="M1.7 5 H5.7 L3.7 1.8Z" fill="#333"/><path d="M0 8 H7.5" stroke="#ccc" stroke-width="0.5"/><path d="M1.7 10.5 H5.7 L3.7 13.7Z" fill="#333"/></svg>
<div class="a" style="left:387.00px;top:403.00px;width:224.50px;height:8.00px;background:linear-gradient(#e8e8e8,#fafafa 40%,#f0f0f0);border-top:0.6px solid #d0d0d0"></div>
<div class="a" style="left:390.00px;top:403.60px;width:36.30px;height:6.90px;background:linear-gradient(#5b95dc,#d2e8fc 40%,#e8f4ff 55%,#6aa6e6);border:0.7px solid #2f62b0;border-radius:3.5px"></div>
<div class="a" style="left:426.30px;top:403.60px;width:166.70px;height:6.90px;background:linear-gradient(#fafafa,#fff 50%,#e4e4e4);border:0.6px solid #cfcfcf;border-radius:3.5px"></div>
<svg class="a" style="left:594.00px;top:403.00px" width="17.50" height="8.00" viewBox="0 0 17.50 8.00"><path d="M6 2 V6 L2.8 4Z" fill="#333"/><path d="M8.2 0 V8" stroke="#ccc" stroke-width="0.5"/><path d="M10.6 2 V6 L13.8 4Z" fill="#333"/></svg>
<div class="a" style="left:611.50px;top:403.00px;width:7.50px;height:8.00px;background:#fff;border-left:0.6px solid #d8d8d8;border-top:0.6px solid #d8d8d8"></div>
<svg class="a" style="left:614.00px;top:408.00px" width="10.00" height="9.00" viewBox="0 0 10.00 9.00"><path d="M9.5 1 L1 9.5 M9.5 4 L4 9.5 M9.5 7 L7 9.5" stroke="#999" stroke-width="0.6"/></svg>
<div class="a" style="left:255.20px;top:269.80px;width:4.00px;height:1.80px;background:repeating-linear-gradient(90deg,#b8b8bc 0,#b8b8bc 0.6px,transparent 0.6px,transparent 1.1px);opacity:.8"></div>
<div class="a" style="left:501.00px;top:164.60px;width:4.00px;height:1.80px;background:repeating-linear-gradient(90deg,#b8b8bc 0,#b8b8bc 0.6px,transparent 0.6px,transparent 1.1px);opacity:.8"></div>
</body></html>
